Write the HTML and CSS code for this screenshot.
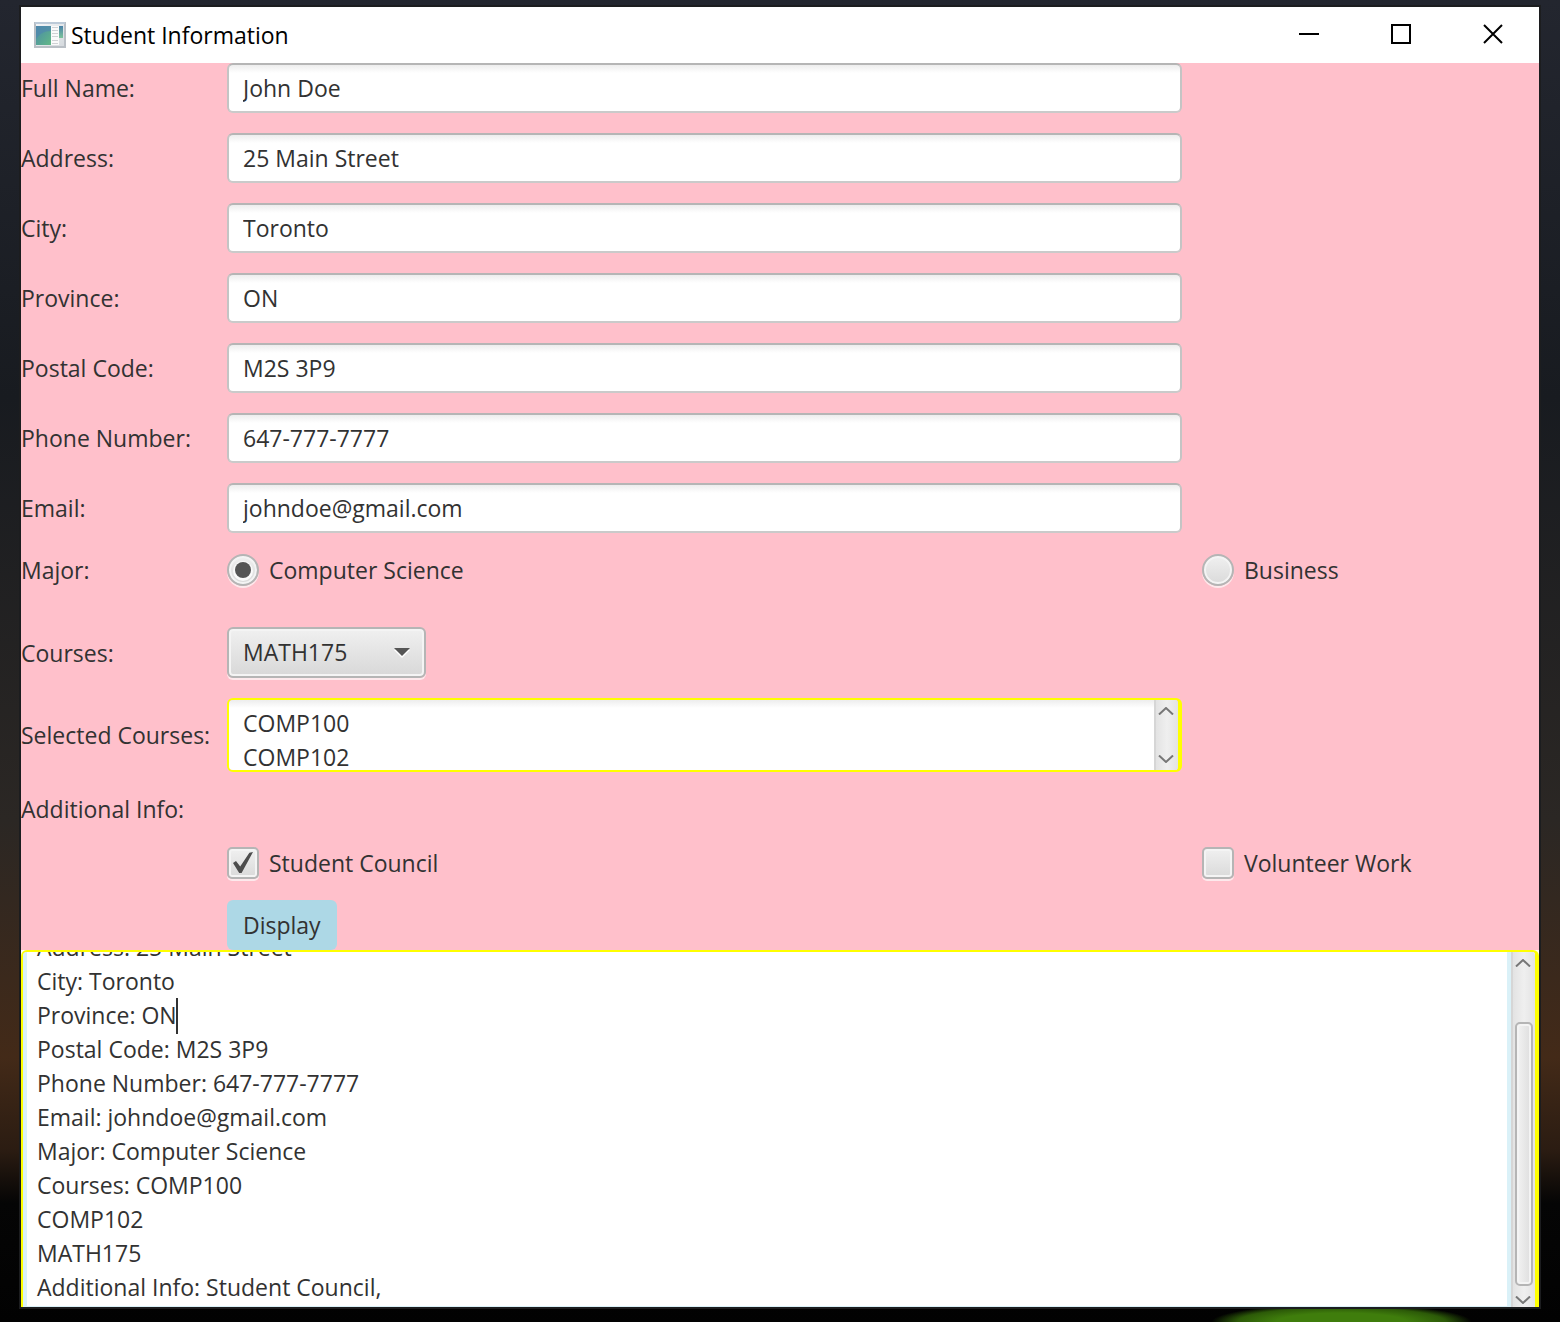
FILE: index.html
```html
<!DOCTYPE html>
<html lang="en">
<head>
<meta charset="utf-8">
<meta name="viewport" content="width=device-width, initial-scale=1">
<title>Student Information</title>
<link rel="stylesheet" href="styles.css">
</head>
<body>
<main class="window">
  <header class="titlebar">
    <svg class="app-icon" viewBox="0 0 32 26" aria-hidden="true">
      <defs>
        <linearGradient id="frame" x1="0" y1="0" x2="1" y2="1"><stop offset="0" stop-color="#f4f6f8"/><stop offset="1" stop-color="#d4d9dd"/></linearGradient>
        <linearGradient id="pane" x1="0" y1="0" x2="1" y2="1"><stop offset="0" stop-color="#4a8aa8"/><stop offset="1" stop-color="#62b886"/></linearGradient>
        <linearGradient id="strip" x1="0" y1="0" x2="0" y2="1"><stop offset="0" stop-color="#4a82a8"/><stop offset="1" stop-color="#7cc49a"/></linearGradient>
      </defs>
      <rect x="1" y="1" width="30" height="24" fill="url(#frame)" stroke="#b9bfc5" stroke-width="2"/>
      <path d="M1 1H31" stroke="#bccad8" stroke-width="2"/>
      <rect x="2" y="4" width="15" height="19" fill="url(#pane)"/>
      <path d="M2 4h15v5C10 9 5 12 2 17z" fill="#5087ae" opacity=".7"/>
      <rect x="17" y="4" width="8" height="19" fill="#fafafa"/>
      <path d="M18 5.500h6M18 8.500h6M18 11.500h6M18 14.500h6M18 18.500h6M18 21.500h6" stroke="#cfd2d5"/>
      <rect x="25" y="4" width="4" height="12" fill="url(#strip)"/>
    </svg>
    <h1 class="title">Student Information</h1>
    <div class="window-controls">
      <button class="control" type="button" aria-label="Minimize"><svg viewBox="0 0 22 22"><path d="M1 11h20" /></svg></button>
      <button class="control" type="button" aria-label="Maximize"><svg viewBox="0 0 22 22"><path d="M2 2h18v18H2z"/></svg></button>
      <button class="control" type="button" aria-label="Close"><svg viewBox="0 0 22 22"><path d="M2 2l18 18M20 2L2 20"/></svg></button>
    </div>
  </header>

  <form class="form">
    <label for="name">Full Name:</label>
    <input class="field" id="name" type="text" value="John Doe">
    <label for="address">Address:</label>
    <input class="field" id="address" type="text" value="25 Main Street">
    <label for="city">City:</label>
    <input class="field" id="city" type="text" value="Toronto">
    <label for="province">Province:</label>
    <input class="field" id="province" type="text" value="ON">
    <label for="postal">Postal Code:</label>
    <input class="field" id="postal" type="text" value="M2S 3P9">
    <label for="phone">Phone Number:</label>
    <input class="field" id="phone" type="text" value="647-777-7777">
    <label for="email">Email:</label>
    <input class="field" id="email" type="text" value="johndoe@gmail.com">

    <span class="caption">Major:</span>
    <label class="choice"><input class="mark radio" type="radio" name="major" checked>Computer Science</label>
    <label class="choice"><input class="mark radio" type="radio" name="major">Business</label>

    <label class="courses-label" for="courses">Courses:</label>
    <div class="combo">
      <select id="courses">
        <option>COMP100</option>
        <option>COMP102</option>
        <option selected>MATH175</option>
      </select>
      <svg class="combo-arrow" viewBox="0 0 16 10" aria-hidden="true"><path d="M0 2h16l-8 8z" fill="#fff"/><path d="M0 0h16l-8 8z" fill="#555"/></svg>
    </div>

    <label for="selected">Selected Courses:</label>
    <div class="pane selected-pane">
      <textarea id="selected" rows="2" readonly>COMP100
COMP102
MATH175</textarea>
      <div class="scrollbar" aria-hidden="true">
        <svg class="chevron" viewBox="0 0 16 8"><path d="M1 7.500l7-6.500 7 6.500"/></svg>
        <svg class="chevron" viewBox="0 0 16 8"><path d="M1 .5l7 6.500 7-6.500"/></svg>
      </div>
    </div>

    <span class="caption section">Additional Info:</span>
    <label class="choice council"><input class="mark check" type="checkbox" checked>Student Council</label>
    <label class="choice"><input class="mark check" type="checkbox">Volunteer Work</label>
    <button class="display" type="button">Display</button>
  </form>

  <section class="pane output-pane">
    <textarea id="output" aria-label="Student details">Full Name: John Doe
Address: 25 Main Street
City: Toronto
Province: ON
Postal Code: M2S 3P9
Phone Number: 647-777-7777
Email: johndoe@gmail.com
Major: Computer Science
Courses: COMP100
COMP102
MATH175
Additional Info: Student Council,</textarea>
    <span class="caret" aria-hidden="true"></span>
    <div class="scrollbar" aria-hidden="true">
      <svg class="chevron" viewBox="0 0 16 8"><path d="M1 7.500l7-6.500 7 6.500"/></svg>
      <div class="thumb"></div>
      <svg class="chevron" viewBox="0 0 16 8"><path d="M1 .5l7 6.500 7-6.500"/></svg>
    </div>
  </section>
</main>
<script src="script.js"></script>
</body>
</html>
```
FILE: script.js
```js
// Keep the newest details in view
const output = document.getElementById("output");
output.scrollTop = output.scrollHeight;
```
FILE: styles.css
```css
* {
  box-sizing: border-box;
}

body {
  display: flex;
  min-height: 100vh;
  margin: 0;
  padding: 7px 21px 15px;
  background:
    radial-gradient(ellipse 130px 18px at 86% 100%, #3f7d0c 0 50%, #2c5a08 80%, transparent 100%) no-repeat,
    linear-gradient(#23262f 0%, #181b20 30%, #2b2724 62%, #432a18 80%, #2b1c12 87%, #050505 91%, #020202 100%);
  color: #323232;
  font: 23px/34px "Open Sans", "Noto Sans", sans-serif;
}

input, select, textarea, button {
  margin: 0;
  color: inherit;
  font: inherit;
}

.window {
  display: flex;
  flex: 1;
  flex-direction: column;
  min-width: 0;
  background: #fff;
  box-shadow: 0 0 0 2px #1c1d1f;
}

.titlebar {
  display: flex;
  align-items: center;
  gap: 5px;
  height: 56px;
  padding-left: 13px;
  background: #fff;
  color: #000;
}

.app-icon {
  width: 32px;
  height: 26px;
}

.title {
  margin: 0;
  font-size: 23px;
  font-weight: 400;
}

.window-controls {
  display: flex;
  align-self: flex-start;
  margin-left: auto;
}

.control {
  display: grid;
  place-items: center;
  width: 92px;
  height: 54px;
  padding: 0;
  border: 0;
  background: none;
}

.control svg {
  width: 22px;
  height: 22px;
  fill: none;
  stroke: #000;
  stroke-width: 2;
}

.form {
  display: grid;
  grid-template-columns: 186px minmax(0, 1fr) 337px;
  gap: 20px;
  align-items: center;
  background: #ffc0cb;
  white-space: nowrap;
}

.form > label:not(.choice),
.caption {
  grid-column-start: 1;
}

.section {
  grid-column-end: -1;
}

.form > .council,
.form > .display {
  grid-column-start: 2;
}

.field {
  width: 100%;
  height: 50px;
  padding: 0 14px;
  border: 2px solid;
  border-color: #b5b5b5 #c4c4c4 #cacaca;
  border-radius: 6px;
  background: linear-gradient(#ededed, #fff 8px);
}

.choice {
  display: flex;
  align-items: center;
  gap: 10px;
}

.mark {
  display: grid;
  place-items: center;
  width: 32px;
  height: 32px;
  border: 2px solid #b5b5b5;
  background: linear-gradient(#f0f0f0, #dadada);
  box-shadow: inset 0 0 0 2px #f4f4f4, 0 2px 0 #fde9ec;
  appearance: none;
}

.radio {
  border-radius: 50%;
}

.radio:checked::before {
  width: 16px;
  height: 16px;
  border-radius: 50%;
  background: #555;
  box-shadow: 0 1px 0 2px #fafafa;
  content: "";
}

.check {
  border-radius: 5px;
}

.check:checked::before {
  width: 20px;
  height: 22px;
  background: #4d4d4d;
  clip-path: polygon(0 50%, 15% 41%, 36% 66%, 82% 3%, 100% 0, 43% 96%, 31% 96%);
  content: "";
}

.courses-label,
.combo {
  margin-top: 20px;
}

.combo {
  position: relative;
  justify-self: start;
  width: 199px;
  height: 51px;
}

.combo select {
  width: 100%;
  height: 100%;
  padding: 0 14px 2px;
  border: 2px solid #b5b5b5;
  border-radius: 6px;
  background: linear-gradient(#f0f0f0, #d8d8d8);
  box-shadow: inset 0 0 0 2px #f4f4f4, 0 2px 0 #fde9ec;
  appearance: none;
}

.combo-arrow {
  position: absolute;
  top: 21px;
  right: 16px;
  width: 16px;
  height: 10px;
  pointer-events: none;
}

.pane {
  position: relative;
  display: flex;
  overflow: hidden;
  border: 2px solid #ff0;
  border-right-width: 4px;
}

.pane textarea {
  flex: 1;
  min-width: 0;
  border: 0;
  outline: 0;
  resize: none;
  scrollbar-width: none;
}

.selected-pane {
  height: 74px;
  border-radius: 6px;
}

.selected-pane textarea {
  padding: 6px 14px 0;
  background: linear-gradient(#ededed, #fff 8px);
}

.output-pane {
  flex: 1 0 357px;
  border-bottom: 0;
  border-radius: 6px 6px 0 0;
}

.output-pane textarea {
  padding: 6px 10px 2px;
  border: solid #daf1f8;
  border-width: 0 4px 1px;
  background: #fff;
}

.caret {
  position: absolute;
  top: 46px;
  left: 153px;
  width: 2px;
  height: 36px;
  background: #323232;
}

.scrollbar {
  display: flex;
  flex-direction: column;
  align-items: center;
  justify-content: space-between;
  width: 24px;
  padding: 7px 0;
  border-left: 2px solid #d6d6d6;
  background: linear-gradient(90deg, #e3e3e3, #efefef 50%, #e3e3e3);
}

.output-pane .scrollbar {
  gap: 10px;
  padding-bottom: 3px;
}

.chevron {
  flex: none;
  width: 16px;
  height: 8px;
  margin-right: 2px;
  fill: none;
  stroke: #777;
  stroke-width: 2;
}

.thumb {
  width: 18px;
  height: 264px;
  margin-top: auto;
  border: 2px solid #b5b5b5;
  border-radius: 5px;
  background: linear-gradient(90deg, #f3f3f3, #dedede);
  box-shadow: inset 0 0 0 2px #f4f4f4;
}

.display {
  justify-self: start;
  height: 50px;
  padding: 0 16px;
  border: 0;
  border-radius: 6px;
  background: #add8e6;
}
```
